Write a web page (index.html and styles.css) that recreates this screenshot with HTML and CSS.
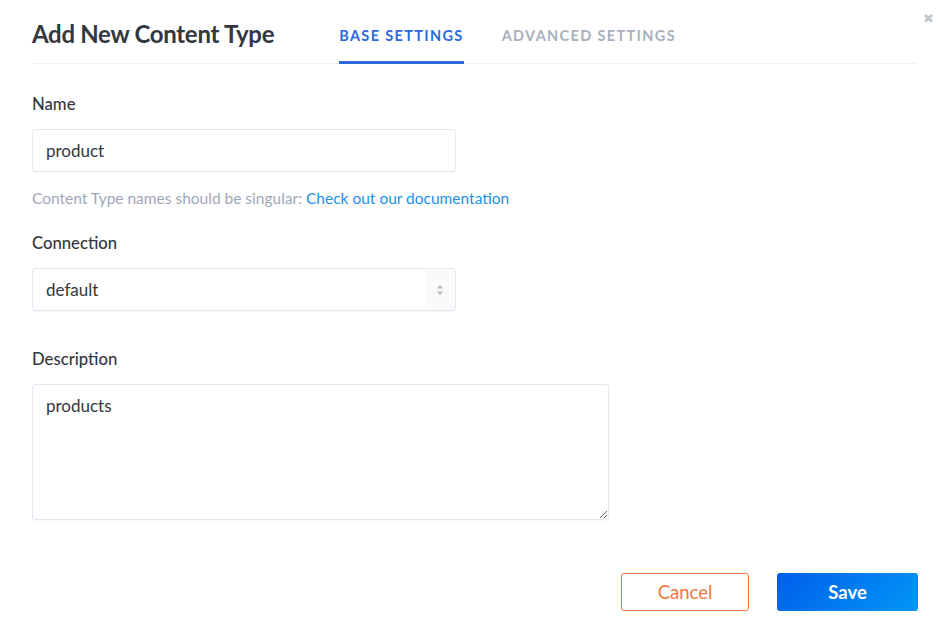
FILE: index.html
```html
<!DOCTYPE html>
<html>
<head>
  <title>Add New Content Type</title>
  <link rel="stylesheet" href="styles.css">
</head>
<body>
  <div class="modal">
    <button class="close" aria-label="Close">&#10006;</button>

    <div class="modal-header">
      <h1>Add New Content Type</h1>
      <div class="tabs">
        <span class="tab active">BASE SETTINGS</span>
        <span class="tab">ADVANCED SETTINGS</span>
      </div>
    </div>

    <div class="modal-body">
      <label class="field-label" for="name">Name</label>
      <input class="field-input" id="name" type="text" value="product">
      <p class="help">Content Type names should be singular: <a href="#">Check out our documentation</a></p>

      <label class="field-label label-connection" for="connection">Connection</label>
      <div class="select-wrap">
        <select class="field-input field-select" id="connection">
          <option value="default">default</option>
        </select>
        <span class="select-arrows">
          <svg width="8" height="12" viewBox="0 0 8 12">
            <path d="M4 1 L7 4.5 H1 Z" fill="#b3b5b9"/>
            <path d="M4 11 L7 7.5 H1 Z" fill="#b3b5b9"/>
          </svg>
        </span>
      </div>

      <label class="field-label label-description" for="description">Description</label>
      <textarea class="field-input field-textarea" id="description">products</textarea>
    </div>

    <div class="modal-footer">
      <button class="btn btn-cancel">Cancel</button>
      <button class="btn btn-save">Save</button>
    </div>
  </div>
</body>
</html>
```

FILE: styles.css
```css
body {
  margin: 0;
  background: #fff;
  font-family: Lato, "Open Sans", sans-serif;
  color: #333740;
}

.modal {
  position: relative;
  width: 939px;
  height: 635px;
  padding: 0 21px 0 32px;
  box-sizing: border-box;
}

.close {
  position: absolute;
  top: 11px;
  right: 5px;
  border: none;
  background: none;
  padding: 0;
  font-size: 13px;
  line-height: 16px;
  color: #c3c5c8;
  cursor: pointer;
}

.modal-header {
  display: flex;
  align-items: stretch;
  height: 63px;
  border-bottom: 1px solid #f1f1f2;
  margin-right: 2px;
}

.modal-header h1 {
  margin: 0;
  font-size: 24px;
  font-weight: 700;
  line-height: 68px;
  color: #333740;
  letter-spacing: -0.3px;
}

.tabs {
  display: flex;
  gap: 38px;
  margin-left: 65px;
}

.tab {
  display: flex;
  align-items: center;
  padding-top: 10px;
  font-size: 14.5px;
  font-weight: 700;
  letter-spacing: 1.35px;
  color: #a9b0bd;
  margin-bottom: -1px;
  border-bottom: 3px solid transparent;
  box-sizing: border-box;
}

.tab.active {
  color: #2d67dd;
  border-bottom-color: #2d67dd;
}

.modal-body {
  display: flex;
  flex-direction: column;
  align-items: flex-start;
}

.field-label {
  display: block;
  margin-top: 30px;
  font-size: 16.7px;
  font-weight: 500;
  line-height: 20px;
  color: #333740;
}

.label-connection {
  margin-top: 26px;
}

.label-description {
  margin-top: 38px;
}

.field-input {
  display: block;
  box-sizing: border-box;
  width: 424px;
  height: 43px;
  margin-top: 15px;
  padding: 0 13px;
  border: 1px solid #e3e9f3;
  border-radius: 3px;
  background: #fff;
  font-family: Lato, "Open Sans", sans-serif;
  font-size: 17px;
  color: #333740;
  box-shadow: 0 1px 1px rgba(104, 118, 142, 0.05);
  outline: none;
}

.help {
  margin: 17px 0 0;
  font-size: 15.5px;
  line-height: 18px;
  color: #9ea7b8;
}

.help a {
  color: #1c91e7;
  text-decoration: none;
}

.select-wrap {
  position: relative;
  margin-top: 15px;
}

.field-select {
  margin-top: 0;
  appearance: none;
  -webkit-appearance: none;
}

.select-arrows {
  position: absolute;
  top: 1px;
  right: 1px;
  bottom: 1px;
  width: 30px;
  display: flex;
  align-items: center;
  justify-content: center;
  background: #fafafb;
  border-radius: 0 3px 3px 0;
}

.field-textarea {
  width: 577px;
  height: 136px;
  padding: 11px 13px;
  line-height: 20px;
  resize: both;
}

.modal-footer {
  display: flex;
  justify-content: flex-end;
  gap: 28px;
  margin-top: 53px;
}

.btn {
  height: 38px;
  border-radius: 3px;
  font-family: Lato, "Open Sans", sans-serif;
  font-size: 18.5px;
  cursor: pointer;
}

.btn-cancel {
  width: 128px;
  background: #fff;
  border: 1px solid #f0773f;
  color: #f0773f;
  font-weight: 400;
}

.btn-save {
  width: 141px;
  border: none;
  background: linear-gradient(315deg, #0097f6, #005eea);
  color: #fff;
  font-weight: 700;
}
```
